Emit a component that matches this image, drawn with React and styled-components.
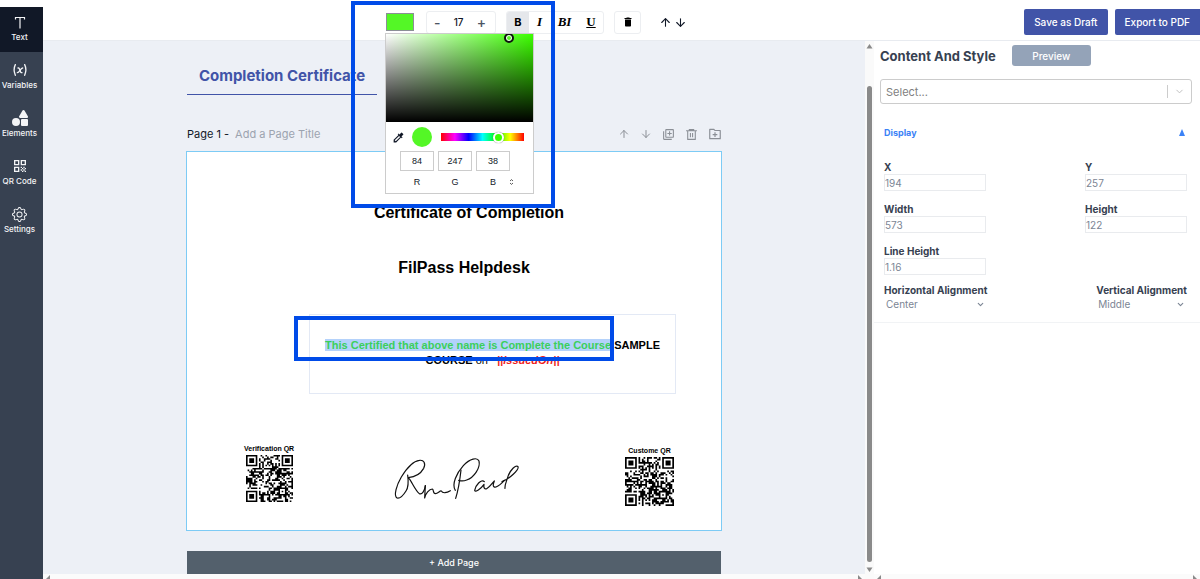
import { useState } from "react";
import styled, { createGlobalStyle } from "styled-components";
import { ArrowUp, ArrowDown, ChevronDown } from "lucide-react";
import { FaShapes } from "react-icons/fa";
import { BsGear } from "react-icons/bs";
import { TbVariable } from "react-icons/tb";
import { MdColorize, MdDelete, MdOutlineLibraryAdd, MdOutlineQrCode } from "react-icons/md";
import { RiDeleteBin6Line, RiFolderAddLine } from "react-icons/ri";

const QR_SIZE = 29;

// finder pattern, returns null when the cell is outside of it
function finderCell(x, y, left, top) {
  const dx = x - left;
  const dy = y - top;
  if (dx < -1 || dx > 7 || dy < -1 || dy > 7) return null;
  const ring = Math.max(Math.abs(dx - 3), Math.abs(dy - 3));
  return ring === 3 || ring <= 1;
}

function qrPath(seed) {
  let value = seed;
  let path = "";
  for (let y = 0; y < QR_SIZE; y++) {
    for (let x = 0; x < QR_SIZE; x++) {
      value = (value * 1103515245 + 12345) % 2147483648;
      let dark = value / 2147483648 > 0.49;
      const finder =
        finderCell(x, y, 0, 0) ??
        finderCell(x, y, QR_SIZE - 7, 0) ??
        finderCell(x, y, 0, QR_SIZE - 7);
      const ring = Math.max(Math.abs(x - 22), Math.abs(y - 22));
      if (finder !== null) dark = finder;
      else if (ring <= 2) dark = ring !== 1;
      else if (x === 6 || y === 6) dark = (x + y) % 2 === 0;
      if (dark) path += `M${x} ${y}h1v1h-1z`;
    }
  }
  return path;
}

function QrImage({ seed, size }) {
  return (
    <svg width={size} height={size} viewBox={`0 0 ${QR_SIZE} ${QR_SIZE}`} aria-hidden="true">
      <path d={qrPath(seed)} fill="#000" />
    </svg>
  );
}

function TextIcon() {
  return (
    <svg width="12" height="13" viewBox="0 0 12 13" fill="none" stroke="currentColor">
      <path d="M1.5 3.5V1.5h9v2M6 1.5v11" strokeWidth="1.2" />
    </svg>
  );
}

function Signature() {
  return (
    <svg width="150" height="70" viewBox="-30 -45 450 210" fill="none" stroke="#111" strokeWidth="3.6" strokeLinecap="round" strokeLinejoin="round" aria-label="Signature">
      <path d="M53 60C56 82 55 98 48 108C38 124 28 131 21 129C10 122 20 90 34 66C50 40 68 18 88 16C102 14 108 26 101 40C92 56 74 66 55 68C66 80 74 104 88 116C96 120 104 108 106 92" />
      <path d="M106 92L104 129C106 116 118 102 127 102C132 104 128 116 136 116C144 116 150 106 154 108C158 116 170 114 181 107" />
      <path d="M213 45C210 72 204 108 197 130" />
      <path d="M196 106C184 88 200 54 220 32C240 10 262 6 267 18C272 38 252 68 230 75C220 79 212 78 206 76" />
      <path d="M283 80C274 70 256 92 254 106C256 114 272 102 282 88C280 98 284 104 290 101C300 96 306 84 313 78C308 90 308 98 318 96C328 92 336 84 343 76" />
      <path d="M336 80C358 72 388 44 384 35C378 27 360 46 354 64C350 78 344 88 345 100" />
    </svg>
  );
}

function Triangle({ points }) {
  return (
    <svg width="7" height="7" viewBox="0 0 7 7">
      <polygon points={points} fill="#8a8a8a" />
    </svg>
  );
}

const navItems = [
  { label: "Text", icon: <TextIcon />, active: true },
  { label: "Variables", icon: <TbVariable size={16} /> },
  { label: "Elements", icon: <FaShapes size={16} /> },
  { label: "QR Code", icon: <MdOutlineQrCode size={16} /> },
  { label: "Settings", icon: <BsGear size={15} /> },
];

const fields = [
  { id: "x", label: "X", value: "194" },
  { id: "y", label: "Y", value: "257" },
  { id: "width", label: "Width", value: "573" },
  { id: "height", label: "Height", value: "122" },
  { id: "lineHeight", label: "Line Height", value: "1.16" },
];

function ColorPicker() {
  const [hue, setHue] = useState(258);
  return (
    <Picker>
      <Saturation>
        <SaturationThumb />
      </Saturation>
      <PickerRow>
        <BareButton aria-label="Pick a color from the screen">
          <MdColorize size={13} />
        </BareButton>
        <CurrentColor />
        <HueSlider
          type="range"
          min="0"
          max="360"
          aria-label="Hue"
          value={hue}
          onChange={(e) => setHue(e.target.value)}
        />
      </PickerRow>
      <Channels>
        <Channel>
          <input defaultValue="84" />R
        </Channel>
        <Channel>
          <input defaultValue="247" />G
        </Channel>
        <Channel>
          <input defaultValue="38" />B
        </Channel>
        <FormatButton aria-label="Change color format">
          <svg width="5" height="6" viewBox="0 0 5 6" fill="none" stroke="#333">
            <path d="M1 2L2.5 .6L4 2M1 4L2.5 5.4L4 4" strokeWidth=".8" />
          </svg>
        </FormatButton>
      </Channels>
    </Picker>
  );
}

function Toolbar() {
  return (
    <Header>
      <Tools>
        <SwatchWrap>
          <Swatch aria-label="Text color" />
          <ColorPicker />
          <PickerHighlight />
        </SwatchWrap>
        <Stepper>
          <BareButton aria-label="Decrease size">-</BareButton>
          <span>17</span>
          <BareButton aria-label="Increase size">+</BareButton>
        </Stepper>
        <StyleGroup>
          <StyleButton $active>B</StyleButton>
          <StyleButton $serif $italic>I</StyleButton>
          <StyleButton $serif $italic>BI</StyleButton>
          <StyleButton $serif $underline>U</StyleButton>
        </StyleGroup>
        <DeleteButton aria-label="Delete">
          <MdDelete size={12} />
        </DeleteButton>
        <LayerButtons>
          <BareButton aria-label="Move up">
            <ArrowUp size={13} />
          </BareButton>
          <BareButton aria-label="Move down">
            <ArrowDown size={13} />
          </BareButton>
        </LayerButtons>
      </Tools>
      <Actions>
        <ActionButton>Save as Draft</ActionButton>
        <ActionButton $flush>Export to PDF</ActionButton>
      </Actions>
    </Header>
  );
}

function Certificate() {
  return (
    <Sheet>
      <Heading $top={51} $left={15}>Certificate of Completion</Heading>
      <Heading $top={106} $left={10}>FilPass Helpdesk</Heading>
      <TextBlock>
        <p>
          <mark>This Certified that above name is Complete the Course</mark> <span>SAMPLE</span>
        </p>
        <p>
          <span>COURSE</span> <Regular>on</Regular>&nbsp;&nbsp; <Token>||issuedOn||</Token>
        </p>
        <TextHighlight />
      </TextBlock>
      <QrBlock $left={57} $top={292}>
        Verification QR
        <QrImage seed={7} size={47} />
      </QrBlock>
      <SignatureBlock>
        <Signature />
      </SignatureBlock>
      <QrBlock $left={438} $top={294}>
        Custome QR
        <QrImage seed={91} size={49} />
      </QrBlock>
    </Sheet>
  );
}

function StylePanel() {
  return (
    <Panel>
      <PanelHead>
        <h2>Content And Style</h2>
        <PreviewButton>Preview</PreviewButton>
      </PanelHead>
      <SelectBox>
        <select aria-label="Content" defaultValue="">
          <option value="">Select...</option>
        </select>
        <span>
          <ChevronDown size={11} />
        </span>
      </SelectBox>
      <Section>
        <SectionToggle>
          Display
          <svg width="6" height="7" viewBox="0 0 6 7">
            <polygon points="3,0 6,7 0,7" fill="#3b82f6" />
          </svg>
        </SectionToggle>
        <FieldGrid>
          {fields.map((field) => (
            <Field key={field.id}>
              {field.label}
              <input defaultValue={field.value} />
            </Field>
          ))}
        </FieldGrid>
        <AlignRow>
          <AlignField>
            Horizontal Alignment
            <div>
              <select defaultValue="Center">
                <option>Center</option>
              </select>
              <ChevronDown size={9} strokeWidth={3} />
            </div>
          </AlignField>
          <AlignField>
            Vertical Alignment
            <div>
              <select defaultValue="Middle">
                <option>Middle</option>
              </select>
              <ChevronDown size={9} strokeWidth={3} />
            </div>
          </AlignField>
        </AlignRow>
      </Section>
    </Panel>
  );
}

function HorizontalScroll() {
  return (
    <HScroll>
      <Triangle points="5,0 5,7 1,4" />
      <Triangle points="2,0 2,7 6,4" />
    </HScroll>
  );
}

function App() {
  return (
    <Shell>
      <GlobalStyle />
      <Sidebar>
        {navItems.map((item) => (
          <NavButton key={item.label} $active={item.active}>
            <NavIcon>{item.icon}</NavIcon>
            {item.label}
          </NavButton>
        ))}
      </Sidebar>
      <Main>
        <Toolbar />
        <Workspace>
          <Column $grow>
            <Canvas>
              <TitleInput aria-label="Certificate name" defaultValue="Completion Certificate" />
              <PageBar>
                <label htmlFor="pageTitle">Page 1 -</label>
                <input id="pageTitle" placeholder="Add a Page Title" />
                <BareButton aria-label="Move page up">
                  <ArrowUp size={12} />
                </BareButton>
                <BareButton aria-label="Move page down">
                  <ArrowDown size={12} />
                </BareButton>
                <BareButton aria-label="Duplicate page">
                  <MdOutlineLibraryAdd size={13} />
                </BareButton>
                <BareButton aria-label="Delete page">
                  <RiDeleteBin6Line size={13} />
                </BareButton>
                <BareButton aria-label="Add page to folder">
                  <RiFolderAddLine size={14} />
                </BareButton>
              </PageBar>
              <Certificate />
              <AddPage>+ Add Page</AddPage>
            </Canvas>
            <HorizontalScroll />
          </Column>
          <VScroll>
            <Triangle points="0.5,5.5 6.5,5.5 3.5,1" />
            <ScrollThumb />
            <Triangle points="0.5,1.5 6.5,1.5 3.5,6" />
          </VScroll>
          <Column>
            <StylePanel />
            <HorizontalScroll />
          </Column>
        </Workspace>
      </Main>
    </Shell>
  );
}

const GlobalStyle = createGlobalStyle`
  * {
    box-sizing: border-box;
  }
  body {
    margin: 0;
    overflow: hidden;
    background: #fff;
    font-family: Inter, "Liberation Sans", sans-serif;
    color: #111827;
  }
  h2, p {
    margin: 0;
  }
  button, input, select {
    font: inherit;
    color: inherit;
    margin: 0;
    padding: 0;
    border: 0;
    background: none;
    border-radius: 0;
    outline: none;
  }
  select {
    appearance: none;
  }
  svg {
    display: block;
    flex: none;
  }
`;

const Shell = styled.div`
  display: flex;
  height: 100vh;
`;

const Sidebar = styled.nav`
  width: 43px;
  flex: none;
  margin-top: 7px;
  background: #374151;
`;

const NavButton = styled.button`
  display: flex;
  flex-direction: column;
  align-items: center;
  width: 100%;
  height: ${(props) => (props.$active ? "45px" : "48px")};
  padding-top: ${(props) => (props.$active ? "6px" : "9px")};
  padding-right: 4px;
  background: ${(props) => (props.$active ? "#111827" : "transparent")};
  color: #f3f4f6;
  font-size: 8px;
  font-weight: 500;
  line-height: 12px;
`;

const NavIcon = styled.span`
  display: flex;
  align-items: center;
  height: 18px;
`;

const Main = styled.main`
  flex: 1;
  min-width: 0;
  display: flex;
  flex-direction: column;
`;

const Header = styled.header`
  display: flex;
  justify-content: space-between;
  align-items: flex-start;
  height: 41px;
  flex: none;
  padding: 9px 0 0 343px;
  border-bottom: 1px solid #e8ebf0;
`;

const Tools = styled.div`
  display: flex;
  align-items: center;
  height: 26px;
`;

const BareButton = styled.button`
  display: flex;
  align-items: center;
  justify-content: center;
`;

const SwatchWrap = styled.div`
  position: relative;
  height: 18px;
  margin-right: 12px;
`;

const Swatch = styled.button`
  display: block;
  width: 28px;
  height: 18px;
  background: #54f726;
  border: 1px solid #8b8f96;
`;

const PickerHighlight = styled.div`
  position: absolute;
  z-index: 3;
  top: -12px;
  left: -35px;
  width: 204px;
  height: 207px;
  border: 4px solid #004be8;
  pointer-events: none;
`;

const Picker = styled.div`
  position: absolute;
  z-index: 2;
  top: 20px;
  left: -1px;
  width: 149px;
  height: 161px;
  background: #fff;
  border: 1px solid #ccc;
`;

const Saturation = styled.div`
  position: relative;
  height: 88px;
  overflow: hidden;
  background: linear-gradient(to top, #000, transparent),
    linear-gradient(to right, #fff, #3cff00);
`;

const SaturationThumb = styled.span`
  position: absolute;
  left: 118px;
  top: -1px;
  width: 10px;
  height: 10px;
  border: 2px solid #111;
  border-radius: 50%;
  box-shadow: inset 0 0 0 1px #fff;
`;

const PickerRow = styled.div`
  display: flex;
  align-items: center;
  padding: 5px 9px 0 6px;
`;

const CurrentColor = styled.span`
  width: 20px;
  height: 20px;
  margin: 0 9px 0 7px;
  border-radius: 50%;
  background: #54f726;
`;

const HueSlider = styled.input`
  appearance: none;
  flex: 1;
  min-width: 0;
  height: 8px;
  background: linear-gradient(to right, #f00, #f0f, #00f, #0ff, #0f0, #ff0, #f00);

  &::-webkit-slider-thumb {
    appearance: none;
    width: 11px;
    height: 11px;
    border-radius: 50%;
    border: 2px solid #fff;
    background: #3cff00;
    box-shadow: 0 0 1px #555;
  }
`;

const Channels = styled.div`
  display: flex;
  gap: 4px;
  padding: 4px 0 0 14px;
`;

const Channel = styled.label`
  display: flex;
  flex-direction: column;
  align-items: center;
  gap: 5px;
  width: 34px;
  font-family: "Liberation Sans", sans-serif;
  font-size: 9px;
  line-height: 12px;

  input {
    width: 100%;
    height: 20px;
    border: 1px solid #ccc;
    text-align: center;
  }
`;

const FormatButton = styled.button`
  align-self: flex-end;
  height: 12px;
  margin-left: -5px;
`;

const Stepper = styled.div`
  display: flex;
  align-items: center;
  justify-content: space-between;
  width: 70px;
  height: 23px;
  margin-right: 10px;
  padding: 0 9px 0 7px;
  border: 1px solid #eceef1;
  border-radius: 3px;
  font-size: 10px;
  font-weight: 500;

  button {
    font-size: 14px;
    color: #4b5563;
  }
`;

const StyleGroup = styled.div`
  display: grid;
  grid-template-columns: 22px 21px 29px 24px;
  height: 23px;
  margin-right: 10px;
  border: 1px solid #eceef1;
  border-radius: 3px;
  overflow: hidden;
`;

const StyleButton = styled.button`
  background: ${(props) => (props.$active ? "#e5e7eb" : "transparent")};
  font-family: ${(props) => (props.$serif ? '"Liberation Serif", serif' : "inherit")};
  font-size: ${(props) => (props.$serif ? "13px" : "11px")};
  font-style: ${(props) => (props.$italic ? "italic" : "normal")};
  text-decoration: ${(props) => (props.$underline ? "underline" : "none")};
  font-weight: 700;
  color: #000;
`;

const DeleteButton = styled(BareButton)`
  width: 27px;
  height: 23px;
  margin-right: 18px;
  border: 1px solid #eceef1;
  border-radius: 3px;
  color: #000;
`;

const LayerButtons = styled.div`
  display: flex;
  gap: 2px;
`;

const Actions = styled.div`
  display: flex;
  gap: 7px;
`;

const ActionButton = styled.button`
  height: 26px;
  padding: 0 10px;
  border-radius: ${(props) => (props.$flush ? "2px 0 0 2px" : "2px")};
  background: #4154a8;
  color: #fff;
  font-size: 10px;
  font-weight: 500;
`;

const Workspace = styled.div`
  flex: 1;
  min-height: 0;
  display: flex;
`;

const Column = styled.div`
  display: flex;
  flex-direction: column;
  min-width: 0;
  flex: ${(props) => (props.$grow ? "1" : "0 0 326px")};
`;

const Canvas = styled.div`
  flex: 1;
  min-height: 0;
  overflow: hidden;
  display: flex;
  flex-direction: column;
  align-items: center;
  background: #edf0f6;
  padding-top: 16px;

  > * {
    width: 536px;
    flex: none;
  }
`;

const TitleInput = styled.input`
  && {
    width: 190px;
  }
  height: 38px;
  margin-right: 344px;
  border-bottom: 1px solid #4154a8;
  text-align: center;
  color: #4154a8;
  font-size: 15px;
  font-weight: 700;
`;

const PageBar = styled.div`
  display: flex;
  align-items: center;
  gap: 10px;
  height: 24px;
  margin: 27px 0 5px;
  padding-left: 1px;
  font-size: 11px;

  input {
    flex: 1;
    min-width: 0;
    margin-left: -4px;
  }
  input::placeholder {
    color: #9ca3af;
    opacity: 1;
  }
  button {
    color: #8b8f96;
  }
`;

const Sheet = styled.article`
  position: relative;
  height: 380px;
  background: #fff;
  border: 1px solid #7dcbf5;
  font-family: "Liberation Sans", Arial, sans-serif;
  color: #000;
`;

const Heading = styled.h2`
  position: absolute;
  top: ${(props) => props.$top}px;
  left: ${(props) => props.$left}px;
  width: 100%;
  font-size: 16px;
  line-height: 20px;
  text-align: center;
`;

const TextBlock = styled.div`
  position: absolute;
  top: 162px;
  left: 122px;
  width: 367px;
  height: 80px;
  display: flex;
  flex-direction: column;
  justify-content: center;
  padding-bottom: 2px;
  border: 1px solid #e3e9f5;
  font-size: 11px;
  font-weight: 700;
  line-height: 15px;
  text-align: center;

  mark {
    background: #b4d2fb;
    color: #3bcf5c;
  }
`;

const Regular = styled.span`
  font-weight: 400;
`;

const Token = styled.span`
  color: #f01c1c;
  font-style: italic;
`;

const TextHighlight = styled.div`
  position: absolute;
  top: 1px;
  left: -16px;
  width: 320px;
  height: 45px;
  border: 4px solid #004be8;
  pointer-events: none;
`;

const QrBlock = styled.div`
  position: absolute;
  top: ${(props) => props.$top}px;
  left: ${(props) => props.$left}px;
  display: flex;
  flex-direction: column;
  align-items: center;
  gap: 2px;
  font-size: 7px;
  font-weight: 700;
  line-height: 9px;
`;

const SignatureBlock = styled.div`
  position: absolute;
  top: 288px;
  left: 193px;
`;

const AddPage = styled.button`
  && {
    width: 534px;
  }
  height: 23px;
  margin-top: 20px;
  background: #53606c;
  color: #fff;
  font-size: 9px;
  font-weight: 500;
`;

const HScroll = styled.div`
  display: flex;
  justify-content: space-between;
  height: 5px;
  flex: none;
  padding: 1px 2px 0;
  overflow: hidden;
  background: #fbfbfb;
`;

const VScroll = styled.div`
  display: flex;
  flex-direction: column;
  align-items: center;
  width: 9px;
  flex: none;
  padding: 2px 0 6px;
  background: #fafafa;
`;

const ScrollThumb = styled.div`
  flex: 1;
  width: 5px;
  margin: 36px 0 4px;
  border-radius: 3px;
  background: #8a8a8a;
`;

const Panel = styled.aside`
  flex: 1;
  min-height: 0;
  overflow: hidden;
  padding: 4px 8px 0 6px;
  color: #374151;
`;

const PanelHead = styled.div`
  display: flex;
  align-items: center;
  gap: 16px;

  h2 {
    font-size: 13px;
    font-weight: 700;
  }
`;

const PreviewButton = styled.button`
  width: 79px;
  height: 21px;
  border-radius: 3px;
  background: #94a3b8;
  color: #fff;
  font-size: 10px;
  font-weight: 500;
`;

const SelectBox = styled.div`
  display: flex;
  align-items: center;
  height: 25px;
  margin-top: 13px;
  border: 1px solid #ccc;
  border-radius: 3px;
  font-size: 11px;
  color: #808080;

  select {
    flex: 1;
    padding-left: 5px;
  }
  span {
    padding: 1px 6px;
    border-left: 1px solid #ccc;
    color: #bbb;
  }
`;

const Section = styled.section`
  margin: 0 -8px 0 -6px;
  padding: 20px 13px 11px 10px;
  border-bottom: 1px solid #f1f3f5;
`;

const SectionToggle = styled.button`
  display: flex;
  align-items: center;
  justify-content: space-between;
  width: 100%;
  height: 16px;
  padding-right: 2px;
  color: #3b82f6;
  font-size: 9px;
  font-weight: 700;
`;

const FieldGrid = styled.div`
  display: grid;
  grid-template-columns: 102px 102px;
  justify-content: space-between;
  gap: 11px;
  margin-top: 20px;
`;

const Field = styled.label`
  font-size: 10px;
  font-weight: 700;
  line-height: 14px;

  input {
    display: block;
    width: 100%;
    height: 17px;
    border: 1px solid #e9ebee;
    color: #7b8594;
    font-weight: 400;
  }
`;

const AlignRow = styled.div`
  display: flex;
  justify-content: space-between;
  margin-top: 8px;
`;

const AlignField = styled.label`
  font-size: 10px;
  font-weight: 700;
  line-height: 14px;

  div {
    display: flex;
    align-items: center;
    padding: 0 2px;
    color: #7b8594;
    font-weight: 400;
  }
  select {
    flex: 1;
    min-width: 0;
  }
`;

export default App;
